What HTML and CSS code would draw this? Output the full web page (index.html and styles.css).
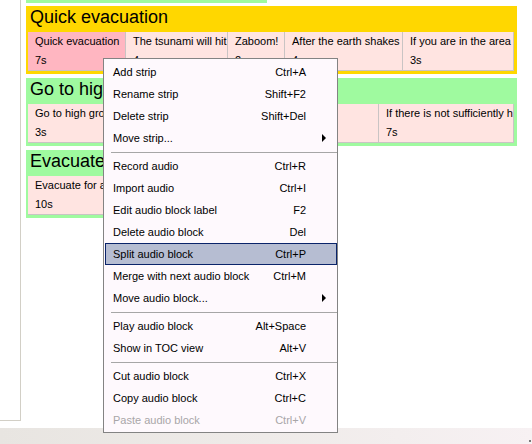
FILE: index.html
```html
<!DOCTYPE html>
<html>
<head>
<meta charset="utf-8">
<link rel="stylesheet" href="styles.css">
</head>
<body>
<div class="app">
  <div class="main">
    <div class="toc"></div>
    <div class="content">
      <div class="strip-tail"></div>
      <div class="strip strip-yellow">
        <div class="strip-title">Quick evacuation</div>
        <div class="blocks">
          <div class="block block-selected" style="width:98px"><div>Quick evacuation</div><div>7s</div></div>
          <div class="block" style="width:102px"><div>The tsunami will hit</div><div>4s</div></div>
          <div class="block" style="width:57px"><div>Zaboom!</div><div>2s</div></div>
          <div class="block" style="width:118px"><div>After the earth shakes</div><div>4s</div></div>
          <div class="block" style="width:111px"><div>If you are in the area</div><div>3s</div></div>
        </div>
      </div>
      <div class="strip strip-green">
        <div class="strip-title">Go to high ground</div>
        <div class="blocks">
          <div class="block" style="width:351px"><div>Go to high ground</div><div>3s</div></div>
          <div class="block" style="width:135px"><div>If there is not sufficiently high ground</div><div>7s</div></div>
        </div>
      </div>
      <div class="strip strip-green">
        <div class="strip-title">Evacuate</div>
        <div class="blocks">
          <div class="block" style="width:200px"><div>Evacuate for at least 1 hour</div><div>10s</div></div>
        </div>
      </div>
    </div>
  </div>
  <div class="status"><div class="grip"></div></div>

  <div class="menu">
    <div class="item"><span class="label">Add strip</span><span class="key">Ctrl+A</span><span class="sub"></span></div>
    <div class="item"><span class="label">Rename strip</span><span class="key">Shift+F2</span><span class="sub"></span></div>
    <div class="item"><span class="label">Delete strip</span><span class="key">Shift+Del</span><span class="sub"></span></div>
    <div class="item"><span class="label">Move strip...</span><span class="key"></span><span class="sub"><i class="arrow"></i></span></div>
    <div class="sep"></div>
    <div class="item"><span class="label">Record audio</span><span class="key">Ctrl+R</span><span class="sub"></span></div>
    <div class="item"><span class="label">Import audio</span><span class="key">Ctrl+I</span><span class="sub"></span></div>
    <div class="item"><span class="label">Edit audio block label</span><span class="key">F2</span><span class="sub"></span></div>
    <div class="item"><span class="label">Delete audio block</span><span class="key">Del</span><span class="sub"></span></div>
    <div class="item item-hot"><span class="label">Split audio block</span><span class="key">Ctrl+P</span><span class="sub"></span></div>
    <div class="item"><span class="label">Merge with next audio block</span><span class="key">Ctrl+M</span><span class="sub"></span></div>
    <div class="item"><span class="label">Move audio block...</span><span class="key"></span><span class="sub"><i class="arrow"></i></span></div>
    <div class="sep"></div>
    <div class="item"><span class="label">Play audio block</span><span class="key">Alt+Space</span><span class="sub"></span></div>
    <div class="item"><span class="label">Show in TOC view</span><span class="key">Alt+V</span><span class="sub"></span></div>
    <div class="sep"></div>
    <div class="item"><span class="label">Cut audio block</span><span class="key">Ctrl+X</span><span class="sub"></span></div>
    <div class="item"><span class="label">Copy audio block</span><span class="key">Ctrl+C</span><span class="sub"></span></div>
    <div class="item item-disabled"><span class="label">Paste audio block</span><span class="key">Ctrl+V</span><span class="sub"></span></div>
  </div>
</div>
</body>
</html>
```

FILE: styles.css
```css
html, body {
  margin: 0;
  padding: 0;
  background: #ffffff;
}

body {
  font-family: "Liberation Sans", Arial, sans-serif;
  font-size: 11px;
  color: #000;
}

.app {
  position: relative;
  width: 532px;
  height: 444px;
  display: flex;
  flex-direction: column;
  overflow: hidden;
}

.main {
  display: flex;
  height: 428px;
  flex: none;
}

.toc {
  width: 20px;
  height: 420px;
  border-right: 1px solid #d2cfc6;
  border-bottom: 1px solid #d2cfc6;
  flex: none;
}

.content {
  margin-left: 5px;
  flex: 1;
  overflow: hidden;
  display: flex;
  flex-direction: column;
  align-items: flex-start;
}

.strip-tail {
  width: 241px;
  height: 3px;
  background: #9ffa9f;
  margin-bottom: 3px;
}

.strip {
  width: max-content;
  padding: 1px 3px 3px 2px;
  margin-bottom: 4px;
}

.strip-yellow { background: #ffd700; }
.strip-green { background: #9ffa9f; }

.strip-title {
  font-size: 18px;
  line-height: 20px;
  height: 25px;
  padding-left: 2px;
  white-space: nowrap;
}

.blocks {
  display: flex;
}

.block {
  box-sizing: border-box;
  height: 39px;
  padding: 0 7px;
  line-height: 19px;
  background: #ffe4e1;
  border-right: 1px solid #c9c4c4;
  border-bottom: 1px solid #c9c4c4;
  white-space: nowrap;
  overflow: hidden;
}

.block-selected {
  background: #ffb6c1;
}

.status {
  height: 16px;
  flex: none;
  background: linear-gradient(to right, #e8e5e1, #efebe9 50%, #f7f1f3);
  display: flex;
  justify-content: flex-end;
  align-items: flex-end;
}

.grip {
  width: 2px;
  height: 2px;
  background: #7a7a7a;
  margin: 0 1px 2px 0;
}

.menu {
  position: absolute;
  left: 103px;
  top: 58px;
  width: 235px;
  box-sizing: border-box;
  background: #fef9fd;
  border: 1px solid #838383;
  padding: 2px 0 1px 1px;
}

.item {
  display: flex;
  align-items: center;
  height: 22px;
  box-sizing: border-box;
  border: 1px solid transparent;
  padding-left: 7px;
  line-height: 20px;
  white-space: nowrap;
}

.item .label {
  flex: 1;
}

.item .key {
  text-align: right;
}

.item .sub {
  width: 30px;
  flex: none;
  display: flex;
  align-items: center;
  padding-left: 16px;
  box-sizing: border-box;
}

.arrow {
  display: block;
  width: 0;
  height: 0;
  border-left: 4px solid #000;
  border-top: 4px solid transparent;
  border-bottom: 4px solid transparent;
}

.item-hot {
  background: #b6bdd2;
  border-color: #0a246a;
}

.item-disabled {
  color: #a8a6a8;
}

.sep {
  height: 6px;
  margin-left: 6px;
  display: flex;
  align-items: center;
}

.sep::before {
  content: "";
  display: block;
  width: 100%;
  height: 1px;
  background: #a6a6a6;
}
```
